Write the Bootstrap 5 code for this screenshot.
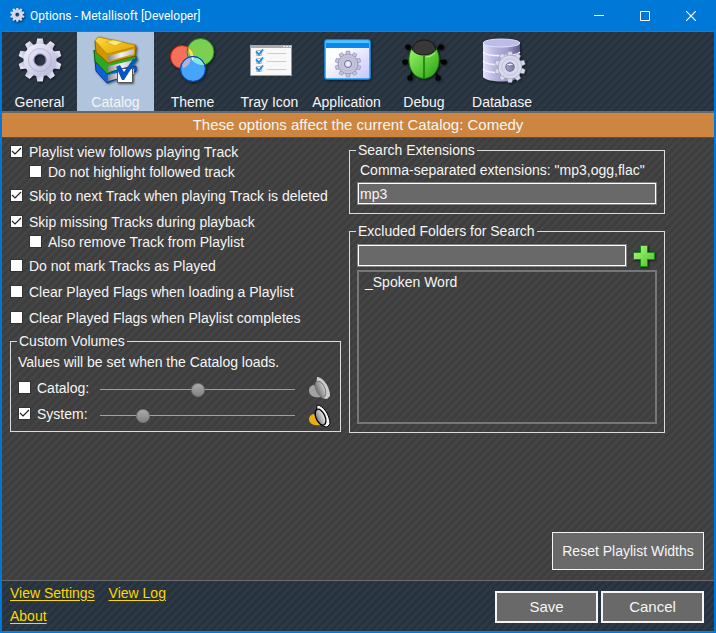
<!DOCTYPE html>
<html lang="en">
<head>
<meta charset="utf-8">
<meta name="viewport" content="width=device-width, initial-scale=1">
<title>Options - Metallisoft [Developer]</title>
<link href="https://cdn.jsdelivr.net/npm/bootstrap@5.3.0/dist/css/bootstrap.min.css" rel="stylesheet">
<style>
  body { font: 14px/20px "Liberation Sans", Arial, sans-serif; color: #f5f5f5; background: #404040; }
  .win { border: 1px solid #0078d7; border-left-width: 2px; border-right-width: 2px; }
  .titlebar { height: 30px; background: #0078d7; font: 12px/20px Roboto, "Open Sans", sans-serif; color: #fff; }
  .titlebar .cap { width: 46px; height: 30px; color: #fff; }
  .stripe-dark { background: #2a3441 linear-gradient(135deg, #27323f 25%, #2d3845 25% 50%, #27323f 50% 75%, #2d3845 75%) 0 0 / 8px 8px; }
  .stripe-grey { background: #404040 linear-gradient(135deg, #3e3e3e 25%, #444 25% 50%, #3e3e3e 50% 75%, #444 75%) 0 0 / 8px 8px; }
  .tools { border-top: 1px solid #696969; border-bottom: 2px solid #696969; }
  .tool { width: 77px; height: 79px; color: #f5f5f5; background: none; line-height: 16px; }
  .tool:first-child { width: 75px; }
  .tool.active { background: #b0c4de; width: 77px; }
  .tool:nth-child(n+6) { width: 78px; }
  .tool svg { width: 56px; height: 56px; }
  .tool span { padding-top: 6px; }
  .notice { background: #cd853f; font-size: 15px; line-height: 24px; border-bottom: 1px solid #5a5048; }
  .opts { display: grid; grid-template-columns: 331fr 316fr; column-gap: 8px; padding: 4px 49px 0 8px; }
  .opt { display: flex; align-items: center; height: 20px; margin-bottom: 6px; }
  .opt.has-sub { margin-bottom: 0; }
  .opt.sub { margin: 0 0 4px 19px; }
  .tick { appearance: none; width: 13px; height: 13px; margin: 0 6px 1px 0; background: #fff; border: 1px solid #333; flex: none; }
  .tick:checked { background: #fff url("data:image/svg+xml,%3Csvg xmlns='http://www.w3.org/2000/svg' viewBox='0 0 11 11'%3E%3Cpath d='M1 5l3 3 6-6' fill='none' stroke='%23222' stroke-width='1.2'/%3E%3C/svg%3E"); }
  .group { border: 1px solid #dcdcdc; padding: 0 7px; }
  .group legend { float: none; width: auto; margin: 0 0 0 -1px; padding: 0 2px; font-size: 14px; line-height: 14px; }
  .group.vol { padding-bottom: 7px; }
  .vol .opt:last-child { margin-bottom: 0; }
  .vol .name { width: 66px; }
  .slide { appearance: none; background: none; height: 14px; min-width: 0; margin: 2px 14px 0 0; }
  .slide::-webkit-slider-runnable-track { height: 1px; background: #a0a0a0; }
  .slide::-webkit-slider-thumb { appearance: none; width: 14px; height: 14px; margin-top: -6px; border: 1px solid #777; border-radius: 50%; background: linear-gradient(#aaa, #808080); }
  .field { height: 21px; color: #f5f5f5; background: #696969; border: 1px solid #fff; outline: 1px solid #828282; padding: 0 1px; margin: 1px; min-width: 0; }
  .folders { height: 154px; color: #f5f5f5; background: none; border: 2px solid #74777c; border-radius: 0; padding: 2px 5px; overflow: hidden; margin-top: 3px; }
  .folders option { padding: 0 1px; line-height: 20px; min-height: 20px; }
  .flat { color: #f5f5f5; background: #696969; border: 1px solid #f5f5f5; }
  .reset { width: 152px; height: 38px; margin: 0 10px 10px; }
  .right { padding-top: 1px; }
  .gap-top { margin-top: 10px; }
  .hint { padding: 3px 0 2px 3px; }
  .pick { padding-top: 6px; }
  .pick button { margin-left: 6px; }
  .foot { border-top: 1px solid #696969; border-bottom: 1px solid #696969; padding: 1px 10px 0 8px; height: 52px; }
  .foot a { color: #ffd700; line-height: 23px; text-underline-offset: 2px; }
  .foot .links { column-gap: 14px; }
  .foot .flat { width: 103px; height: 32px; border-width: 2px; font-size: 15px; }
  .pair { gap: 3px; }
  .shadow-ico { filter: drop-shadow(1px 1px 1px #0009); }
</style>
<script src="https://cdn.jsdelivr.net/npm/bootstrap@5.3.0/dist/js/bootstrap.bundle.min.js"></script>
</head>
<body>
<svg width="0" height="0" class="position-absolute" aria-hidden="true">
  <defs>
    <linearGradient id="lav" x1="0" y1="0" x2="1" y2="1"><stop stop-color="#f4f4ff"/><stop offset="1" stop-color="#b4b4d8"/></linearGradient>
    <linearGradient id="cyl"><stop stop-color="#e4e2fa"/><stop offset=".3" stop-color="#b9b7e2"/><stop offset=".65" stop-color="#a09dca"/><stop offset="1" stop-color="#5c5989"/></linearGradient>
    <linearGradient id="pane" x1="0" y1="0" x2="1" y2="1"><stop offset=".3" stop-color="#fff"/><stop offset="1" stop-color="#c4c4ff"/></linearGradient>
    <linearGradient id="gold" x1="0" y1="0" x2="1" y2="1"><stop stop-color="#ffdc3c"/><stop offset="1" stop-color="#e0a000"/></linearGradient>
    <linearGradient id="leaf" x1="0" y1="0" x2="1" y2="1"><stop stop-color="#9cf66a"/><stop offset="1" stop-color="#23a010"/></linearGradient>
    <linearGradient id="plus" x1="0" y1="0" x2="1" y2="1"><stop stop-color="#b4f890"/><stop offset="1" stop-color="#48c020"/></linearGradient>
    <linearGradient id="cone"><stop stop-color="#777"/><stop offset="1" stop-color="#eee"/></linearGradient>
    <linearGradient id="page"><stop stop-color="#888"/><stop offset=".5" stop-color="#f4f4f4"/><stop offset="1" stop-color="#bbb"/></linearGradient>
    <path id="tooth" d="M-4-15L-2.800-21.500H2.800L4-15z"/>
    <g id="gear">
      <use href="#tooth"/><use href="#tooth" transform="rotate(36)"/><use href="#tooth" transform="rotate(72)"/><use href="#tooth" transform="rotate(108)"/><use href="#tooth" transform="rotate(144)"/><use href="#tooth" transform="rotate(180)"/><use href="#tooth" transform="rotate(216)"/><use href="#tooth" transform="rotate(252)"/><use href="#tooth" transform="rotate(288)"/><use href="#tooth" transform="rotate(324)"/>
      <path fill-rule="evenodd" d="M0-16.500a16.500 16.500 0 1 1 0 33a16.500 16.500 0 1 1 0-33zM0-5.500a5.500 5.500 0 1 0 0 11a5.500 5.500 0 1 0 0-11z"/>
      <circle r="6" fill="none" stroke="#55557f" stroke-width="1"/>
      <circle r="11.500" fill="none" stroke="#a9a9cc" stroke-width=".7"/>
    </g>
  </defs>
</svg>
<div class="win d-flex flex-column min-vh-100">
  <header class="titlebar d-flex align-items-center ps-1">
    <svg class="shadow-ico ms-1" width="16" height="16" viewBox="-22 -20 48 48"><use href="#gear" fill="#dcdcf2"/></svg>
    <span class="ms-1 me-auto">Options - Metallisoft [Developer]</span>
    <button class="cap btn p-0 border-0 rounded-0 d-flex align-items-center justify-content-center" aria-label="Minimize"><svg width="10" height="10"><path d="M0 4.500h10" stroke="#fff"/></svg></button>
    <button class="cap btn p-0 border-0 rounded-0 d-flex align-items-center justify-content-center" aria-label="Maximize"><svg width="10" height="10"><path d="M.5.5h9v9h-9z" fill="none" stroke="#fff"/></svg></button>
    <button class="cap btn p-0 border-0 rounded-0 d-flex align-items-center justify-content-center" aria-label="Close"><svg width="10" height="10"><path d="M0 0l10 10M10 0L0 10" stroke="#fff" stroke-width="1.200"/></svg></button>
  </header>

  <nav class="tools stripe-dark d-flex">
    <button class="tool border-0 p-0 d-flex flex-column align-items-center">
      <svg class="shadow-ico" viewBox="-28 -28 56 56"><use href="#gear" fill="url(#lav)"/></svg><span>General</span></button>
    <button class="tool active border-0 p-0 d-flex flex-column align-items-center">
      <svg class="shadow-ico" viewBox="0 0 56 56">
        <path d="M7 28l13 12 28-6v5L21 50l-2 1L8 39z" fill="#0b62dc" stroke="#053a98"/><path d="M20 43l26-6v5l-26 7z" fill="url(#page)"/>
        <path d="M6 18l14 12 28-6v5L21 41l-2 1L7 29z" fill="#2ea822" stroke="#0b6008"/><path d="M20 34l26-6v5l-26 7z" fill="url(#page)"/>
        <path d="M7 9l12 11 28-7 1 3-1 8-27 7-12-11z" fill="#d09800" stroke="#8a5c00"/><path d="M20 24l26-7v5l-26 7z" fill="url(#page)"/>
        <path d="M7 9l3-4 37 8v2l-28 7z" fill="url(#gold)" stroke="#b88400" stroke-width=".8"/><path d="M18 10l7-2 10 2-8 4z" fill="#ffe876" stroke="#c79a10" stroke-width=".6"/>
        <path d="M29.500 36.500h15v14h-15z" fill="#fff" stroke="#555"/><path d="M28 35l4-2 4 7 9-13 5-1-14 22h-2z" fill="#0a55c4"/>
      </svg><span>Catalog</span></button>
    <button class="tool border-0 p-0 d-flex flex-column align-items-center">
      <svg class="shadow-ico" viewBox="0 0 56 56">
        <circle cx="17" cy="25" r="11.500" fill="#f4705a" stroke="#c51a00"/><circle cx="35.500" cy="20" r="13.500" fill="#7bd052" stroke="#258c10"/>
        <path d="M23.500 15.500a11.500 11.500 0 0 1 5 12 13.500 13.500 0 0 1-5-12z" fill="#ffe060" stroke="#c89010" stroke-width=".6"/>
        <circle cx="28" cy="37" r="12.500" fill="#45a5fa" stroke="#074cb0"/><path d="M17 34a12 12 0 0 1 9-8.500 12 12 0 0 1-7 10.500q-2 0-2-2z" fill="#b6b0dd"/><path d="M29 25.300a12 12 0 0 1 10 7.700 13 13 0 0 1-11-4z" fill="#88e8df"/><path d="M26 25.300h3l-1 4z" fill="#fff"/>
        <circle cx="28" cy="37" r="12.500" fill="none" stroke="#074cb0"/>
      </svg><span>Theme</span></button>
    <button class="tool border-0 p-0 d-flex flex-column align-items-center">
      <svg viewBox="1 0 56 56"><path d="M9.500 13.500h41v30h-41z" fill="#f8f8f8" stroke="#9a9a9a"/><path d="M9 13h42v3H9z" fill="#aaa"/><path d="M42 14h2v1h-2zM45 14h2v1h-2zM48 14h2v1h-2z" fill="#eee"/>
        <path d="M15.500 18.500h5v5h-5zM15.500 26.500h5v5h-5zM15.500 34.500h5v5h-5z" fill="#fff" stroke="#bbb"/><path d="M26 21.500h19M26 29.500h19M26 37.500h19" stroke="#ccc"/><path d="M15 19.500l3 3 4-5M15 27.500l3 3 4-5M15 35.500l3 3 4-5" fill="none" stroke="#2690e0" stroke-width="2"/></svg><span>Tray Icon</span></button>
    <button class="tool border-0 p-0 d-flex flex-column align-items-center">
      <svg class="shadow-ico" viewBox="0 1 56 56"><rect x="6" y="9" width="45" height="39" rx="2" fill="url(#pane)" stroke="#12a0f8" stroke-width="1.500"/><path d="M7 10h43v7H7z" fill="#0b88f0"/><path d="M7 10h43v2H7z" fill="#4cc6ff"/><g transform="translate(29 33) scale(.6)"><use href="#gear" fill="#c4c4dc" stroke="#77779c" stroke-width=".8"/></g></svg><span>Application</span></button>
    <button class="tool border-0 p-0 d-flex flex-column align-items-center">
      <svg class="shadow-ico" viewBox="0 0 56 56"><g transform="translate(2)"><g stroke="#050505" stroke-width="2" fill="none"><path d="M16 20l-6-5M36 20l6-5M12 29H7M40 29h6M15 38l-3 8M37 38l3 8"/></g><g fill="#050505"><circle cx="10" cy="15" r="2.800"/><circle cx="43" cy="15" r="2.800"/><circle cx="7" cy="30" r="2.800"/><circle cx="46" cy="30" r="2.800"/><circle cx="12" cy="46" r="2.800"/><circle cx="40" cy="46" r="2.800"/></g>
        <path d="M14 16C7 28 12 46 26 46.500 40 46 45 28 38 16z" fill="url(#leaf)" stroke="#147408"/><path d="M14 17C18 5 34 5 38 17 34 25 18 25 14 17z" fill="#383838" stroke="#161616"/><path d="M26 24v22" stroke="#147408" stroke-width="1.500"/><path d="M28 25c4 0 7-2 9-4" stroke="#b5ff8b" fill="none"/></g></svg><span>Debug</span></button>
    <button class="tool border-0 p-0 d-flex flex-column align-items-center">
      <svg class="shadow-ico" viewBox="0 0 56 56"><path d="M9 11v34c4 6 33 6 37 0V11z" fill="url(#cyl)"/><ellipse cx="27.500" cy="11" rx="18.500" ry="4" fill="#bdbbe8" stroke="#e2e0ff"/><path d="M9 20c4 5 33 5 37 0M9 29c4 5 33 5 37 0M9 37c4 5 33 5 37 0" fill="none" stroke="#f4f2ff" stroke-width="1.300"/><g transform="translate(36 35) scale(.72)"><use href="#gear" fill="#d9d9ec" stroke="#8080a8" stroke-width=".6"/></g></svg><span>Database</span></button>
  </nav>
  <div class="notice text-center">These options affect the current Catalog: Comedy</div>

  <main class="stripe-grey flex-grow-1 d-flex flex-column">
    <div class="opts">
      <div>
        <label class="opt has-sub"><input class="tick" type="checkbox" checked>Playlist view follows playing Track</label>
        <label class="opt sub"><input class="tick" type="checkbox">Do not highlight followed track</label>
        <label class="opt"><input class="tick" type="checkbox" checked>Skip to next Track when playing Track is deleted</label>
        <label class="opt has-sub"><input class="tick" type="checkbox" checked>Skip missing Tracks during playback</label>
        <label class="opt sub"><input class="tick" type="checkbox">Also remove Track from Playlist</label>
        <label class="opt"><input class="tick" type="checkbox">Do not mark Tracks as Played</label>
        <label class="opt"><input class="tick" type="checkbox">Clear Played Flags when loading a Playlist</label>
        <label class="opt"><input class="tick" type="checkbox">Clear Played Flags when Playlist completes</label>
        <fieldset class="group vol">
          <legend>Custom Volumes</legend>
          <div class="opt mt-1">Values will be set when the Catalog loads.</div>
          <div class="opt">
            <label class="name d-flex align-items-center me-3"><input class="tick" type="checkbox">Catalog:</label>
            <input class="slide flex-grow-1" type="range" min="0" max="100" value="50" aria-label="Catalog volume">
            <svg width="24" height="24" viewBox="1 0 24 24" opacity=".8"><path d="M1 14c0-3 3-5 5-5l7 12c-5 1-12 0-12-7z" fill="#bbb"/><path d="M9 1c6 0 13 10 13 19l-3 3c-5 0-10-5-11-10z" fill="#f0f0f0"/><ellipse cx="12.500" cy="13" rx="4.500" ry="8.500" transform="rotate(-24 13 13)" fill="url(#cone)" stroke="#888"/></svg>
          </div>
          <div class="opt">
            <label class="name d-flex align-items-center me-3"><input class="tick" type="checkbox" checked>System:</label>
            <input class="slide flex-grow-1" type="range" min="0" max="100" value="20" aria-label="System volume">
            <svg class="mt-1" width="24" height="24" viewBox="1 0 24 24"><path d="M1 15c0-3 3-5 5-5l7 11c-5 1-12 0-12-6z" fill="#e8ae12"/><path d="M9 1c6 0 13 10 13 19l-3 3c-5 0-10-5-11-10z" fill="#f4f4f4" stroke="#000"/><ellipse cx="12.500" cy="13" rx="4.500" ry="8.500" transform="rotate(-24 13 13)" fill="url(#cone)" stroke="#000" stroke-width="1.300"/></svg>
          </div>
        </fieldset>
      </div>
      <div class="right">
        <fieldset class="group pb-2">
          <legend>Search Extensions</legend>
          <label class="hint d-block" for="ext">Comma-separated extensions: "mp3,ogg,flac"</label>
          <div class="d-flex"><input id="ext" class="field flex-grow-1" value="mp3"></div>
        </fieldset>
        <fieldset class="group pb-2 gap-top">
          <legend>Excluded Folders for Search</legend>
          <div class="pick d-flex align-items-center">
            <input class="field flex-grow-1" aria-label="Folder to exclude">
            <button class="border-0 bg-transparent p-0 d-flex" aria-label="Add folder"><svg width="24" height="22" viewBox="0 0 24 22" class="shadow-ico"><path d="M7.500.5h7v7h7v7h-7v7h-7v-7h-7v-7h7z" fill="url(#plus)" stroke="#188a0a"/></svg></button>
          </div>
          <select class="folders w-100 d-block" size="7" aria-label="Excluded folders"><option>_Spoken Word</option></select>
        </fieldset>
      </div>
    </div>
    <button class="flat reset mt-auto ms-auto p-0">Reset Playlist Widths</button>
  </main>
  <footer class="foot stripe-dark d-flex justify-content-between">
    <div>
      <div class="d-flex links"><a href="#settings">View Settings</a><a href="#log">View Log</a></div>
      <a href="#about">About</a>
    </div>
    <div class="d-flex align-items-center pair"><button class="flat p-0">Save</button><button class="flat p-0">Cancel</button></div>
  </footer>
</div>
</body>
</html>
